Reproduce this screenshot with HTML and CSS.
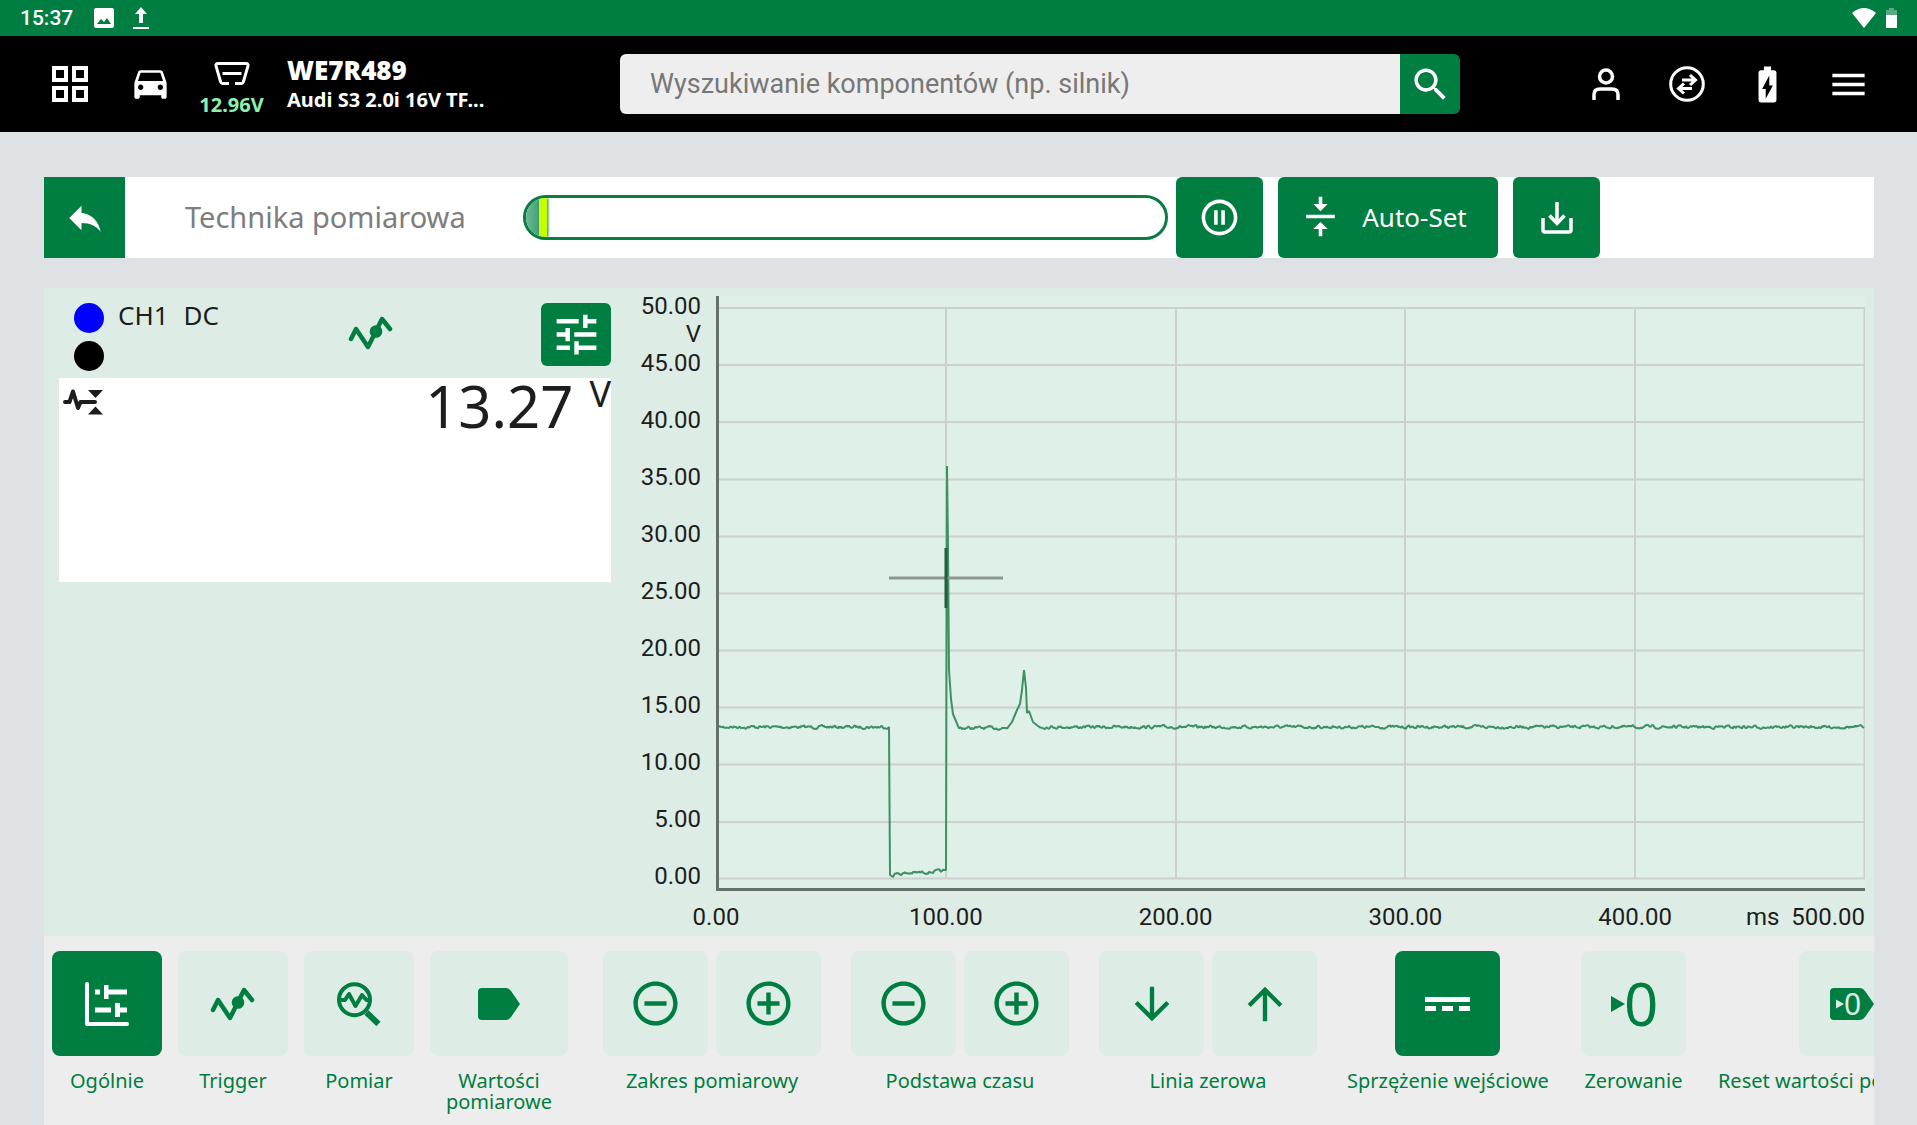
FILE: index.html
```html
<!DOCTYPE html>
<html lang="pl">
<head>
<meta charset="utf-8">
<meta name="viewport" content="width=device-width, initial-scale=1">
<title>Technika pomiarowa</title>
<link rel="stylesheet" href="styles.css">
</head>
<body>
<div class="status">
  <span class="clock">15:37</span>
  <svg class="status-image" width="20" height="20" viewBox="0 0 20 20"><path fill="#fff" fill-rule="evenodd" d="M2 0h16a2 2 0 0 1 2 2v16a2 2 0 0 1-2 2H2a2 2 0 0 1-2-2V2a2 2 0 0 1 2-2zM3 16h14l-4-6-3 4-3-3z"/></svg>
  <svg class="status-upload" width="18" height="22" viewBox="0 0 18 22"><path fill="#fff" d="M9 0l6 7h-4v9H7V7H3zM1 20h16v2H1z"/></svg>
  <span class="spacer"></span>
  <svg width="24" height="20" viewBox="0 0 24 20"><path fill="#fff" d="M12 20L0 5Q12-5 24 5z"/></svg>
  <svg class="status-battery" width="11" height="20" viewBox="0 0 11 20"><path fill="#fff" opacity=".35" d="M3 0h5v2h3v5H0V2h3z"/><path fill="#fff" d="M0 7h11v13H0z"/></svg>
</div>

<header class="header">
  <div class="header-left">
    <button class="icon-cell" aria-label="Menu główne"><svg width="48" height="48" viewBox="0 0 24 24" fill="#fff"><path d="M3 3v8h8V3H3zm6 6H5V5h4v4zm-6 4v8h8v-8H3zm6 6H5v-4h4v4zm4-16v8h8V3h-8zm6 6h-4V5h4v4zm-6 4v8h8v-8h-8zm6 6h-4v-4h4v4z"/></svg></button>
    <button class="icon-cell" aria-label="Pojazd"><svg width="43" height="43" viewBox="0 0 24 24" fill="#fff"><path d="M18.92 5.01C18.72 4.42 18.16 4 17.5 4h-11c-.66 0-1.21.42-1.42 1.01L3 11v8c0 .55.45 1 1 1h1c.55 0 1-.45 1-1v-1h12v1c0 .55.45 1 1 1h1c.55 0 1-.45 1-1v-8l-2.08-5.99zM6.5 15c-.83 0-1.5-.67-1.5-1.5S5.67 12 6.5 12s1.5.67 1.5 1.5S7.33 15 6.5 15zm11 0c-.83 0-1.5-.67-1.5-1.5s.67-1.5 1.5-1.5 1.5.67 1.5 1.5-.67 1.5-1.5 1.5zM5 10l1.5-4.5h11L19 10H5z"/></svg></button>
    <button class="icon-cell voltage"><svg width="36" height="23" viewBox="0 0 36 23" fill="none" stroke="#fff" stroke-width="3"><path d="M15 21.500H9Q7 21.500 6.500 19.500L2 4Q1.500 1.500 4 1.500H32Q34.500 1.500 34 4L29.500 19.500Q29 21.500 27 21.500H21M8.500 11.500H27.500"/></svg><span>12.96V</span></button>
    <div class="vehicle"><strong>WE7R489</strong><span>Audi S3 2.0i 16V TF...</span></div>
  </div>
  <form class="search" role="search">
    <input type="text" aria-label="Wyszukiwanie" placeholder="Wyszukiwanie komponentów (np. silnik)">
    <button type="button" aria-label="Szukaj"><svg width="43" height="43" viewBox="0 0 24 24" fill="#fff"><path d="M15.500 14h-.79l-.28-.27C15.410 12.590 16 11.110 16 9.500 16 5.910 13.090 3 9.500 3S3 5.910 3 9.500 5.910 16 9.500 16c1.610 0 3.090-.59 4.230-1.570l.27.28v.79l5 4.990L20.490 19l-4.990-5zm-6 0C7.010 14 5 11.990 5 9.500S7.010 5 9.500 5 14 7.010 14 9.500 11.990 14 9.500 14z"/></svg></button>
  </form>
  <div class="header-right">
    <button class="icon-cell" aria-label="Użytkownik"><svg width="28" height="32" viewBox="0 0 28 32" fill="none" stroke="#fff" stroke-width="3.500"><circle cx="14" cy="8.500" r="6.500"/><path d="M2 32v-5.500Q2 21 8 21H20Q26 21 26 26.500V32"/></svg></button>
    <button class="icon-cell" aria-label="Połączenie"><svg width="36" height="36" viewBox="0 0 36 36" fill="none" stroke="#fff" stroke-width="3"><circle cx="18" cy="18" r="16.300"/><path d="M13 14H26M21 9l5.500 5-5.500 5M23 22.500H10M15 17.500l-5.500 5 5.500 5"/></svg></button>
    <button class="icon-cell" aria-label="Akumulator"><svg width="43" height="43" viewBox="0 0 24 24" fill="#fff"><path d="M15.670 4H14V2h-4v2H8.330C7.600 4 7 4.600 7 5.330v15.330C7 21.400 7.600 22 8.330 22h7.330c.74 0 1.340-.6 1.340-1.330V5.330C17 4.600 16.400 4 15.670 4zM11 20v-5.500H9L13 7v5.500h2L11 20z"/></svg></button>
    <button class="icon-cell" aria-label="Menu"><svg width="43" height="43" viewBox="0 0 24 24" fill="#fff"><path d="M3 18h18v-2H3v2zm0-5h18v-2H3v2zm0-7v2h18V6H3z"/></svg></button>
  </div>
</header>

<main class="main">
  <section class="toolbar">
    <button class="back" aria-label="Wstecz"><svg width="42" height="42" viewBox="0 0 24 24" fill="#fff"><path d="M10 9V5l-7 7 7 7v-4.100c5 0 8.500 1.600 11 5.100-1-5-4-10-11-11z"/></svg></button>
    <h1>Technika pomiarowa</h1>
    <div class="progress" role="progressbar" aria-label="Postęp pomiaru"><span class="progress-fill"></span><span class="progress-mark"></span></div>
    <button class="action" aria-label="Pauza"><svg width="43" height="43" viewBox="0 0 24 24" fill="#fff"><path d="M9 16h2V8H9v8zm3-14C6.480 2 2 6.480 2 12s4.480 10 10 10 10-4.480 10-10S17.520 2 12 2zm0 18c-4.410 0-8-3.590-8-8s3.590-8 8-8 8 3.590 8 8-3.590 8-8 8zm1-4h2V8h-2v8z"/></svg></button>
    <button class="action action-wide"><svg width="43" height="43" viewBox="0 0 24 24" fill="#fff"><path d="M8 19h3v4h2v-4h3l-4-4-4 4zm8-14h-3V1h-2v4H8l4 4 4-4zM4 11v2h16v-2H4z"/></svg>Auto-Set</button>
    <button class="action" aria-label="Zapisz"><svg width="32" height="32" viewBox="0 0 32 32" fill="none" stroke="#fff" stroke-width="3.500"><path d="M2 16v12Q2 30 4 30H28Q30 30 30 28V16M16 0V22M8.500 13.500L16 21.500l7.500-8"/></svg></button>
  </section>

  <section class="scope">
    <div class="channel">
      <div class="channel-head">
        <div class="dots"><span class="dot dot-blue"></span><span class="dot dot-black"></span></div>
        <div class="channel-name"><span>CH1</span><span>DC</span></div>
        <svg class="wave" width="46" height="34" viewBox="0 0 46 34"><path fill="none" stroke="#007d40" stroke-width="4.500" stroke-linecap="round" stroke-linejoin="round" d="M3 23L8 13 20 31 34 3l8 10"/><circle cx="28" cy="15.500" r="6.300" fill="#007d40"/></svg>
        <button class="settings" aria-label="Ustawienia kanału"><svg width="53" height="53" viewBox="0 0 24 24" fill="#fff"><path d="M3 17v2h6v-2H3zM3 5v2h10V5H3zm10 16v-2h8v-2h-8v-2h-2v6h2zM7 9v2H3v2h4v2h2V9H7zm14 4v-2H11v2h10zm-6-4h2V7h4V5h-4V3h-2v6z"/></svg></button>
      </div>
      <div class="reading">
        <svg width="40" height="26" viewBox="0 0 40 26"><path fill="none" stroke="#1d1d1d" stroke-width="4" stroke-linecap="round" stroke-linejoin="round" d="M2 13H6.500L10 2.500 15 19l2.500-6H32"/><path fill="#1d1d1d" d="M25 1H40l-7.500 8zM25 25.500H40l-7.500-8z"/></svg>
        <div class="value">13.27<span class="unit">V</span></div>
      </div>
    </div>

    <div class="chart">
      <div class="y-labels">
        <div>50.00<br>V</div><div>45.00</div><div>40.00</div><div>35.00</div><div>30.00</div><div>25.00</div><div>20.00</div><div>15.00</div><div>10.00</div><div>5.00</div><div>0.00</div>
      </div>
      <div class="plot">
        <svg class="plot-svg" viewBox="0 0 1149 595" preserveAspectRatio="none" role="img" aria-label="Przebieg napięcia">
          <path class="grid-lines" d="M0 12H1149M0 69H1149M0 126H1149M0 183.500H1149M0 240.500H1149M0 297.500H1149M0 354.500H1149M0 411.500H1149M0 468.500H1149M0 526H1149M0 582.500H1149M230 12V583M460 12V583M689 12V583M919 12V583M1148.500 12V583"/>
          <path class="trace" id="trace"/>
          <path class="cross" d="M173 282H287"/>
          <path class="cross-level" d="M230 252V312"/>
          <path class="axes" d="M1.500 0V593.500H1149"/>
        </svg>
        <div class="x-labels">
          <div><span>0.00</span></div><div><span>100.00</span></div><div><span>200.00</span></div><div><span>300.00</span></div><div><span>400.00</span><em>ms&nbsp; 500.00</em></div>
        </div>
      </div>
    </div>
  </section>

  <nav class="strip" aria-label="Funkcje pomiaru">
    <div class="tabs">
      <button class="tool"><span class="tile active"><svg width="44" height="44" viewBox="0 0 44 44"><path fill="none" stroke="#fff" stroke-width="4" stroke-linecap="round" stroke-linejoin="round" d="M2 2V42H42"/><path fill="#fff" d="M10 7.500h5v5h-5zM19 3h4.500v4.500H42v5H23.500V17H19zM10 25.500h16v5H10zM30 21h5v4.500h7v5h-7V35h-5z"/></svg></span><span class="caption">Ogólnie</span></button>
      <button class="tool"><span class="tile"><svg width="46" height="34" viewBox="0 0 46 34"><path fill="none" stroke="#007d40" stroke-width="4.500" stroke-linecap="round" stroke-linejoin="round" d="M3 23L8 13 20 31 34 3l8 10"/><circle cx="28" cy="15.500" r="6.300" fill="#007d40"/></svg></span><span class="caption">Trigger</span></button>
      <button class="tool"><span class="tile"><svg width="44" height="44" viewBox="0 0 44 44" fill="none" stroke="#007d40" stroke-width="4"><circle cx="17.500" cy="17.700" r="15.500"/><path stroke-linejoin="round" d="M3 18H8L12 12l6.500 12L25 13l4.500 5H33"/><path stroke-width="6" d="M29.500 30.500L41.500 42"/></svg></span><span class="caption">Pomiar</span></button>
      <button class="tool tool-wide"><span class="tile"><svg width="42" height="32" viewBox="0 0 42 32"><path fill="#007d40" d="M4 0H28Q31 0 33 3L42 16 33 29Q31 32 28 32H4Q0 32 0 28V4Q0 0 4 0z"/></svg></span><span class="caption">Wartości pomiarowe</span></button>
    </div>
    <div class="group">
      <div class="pair">
        <button class="tile" aria-label="Zmniejsz zakres"><svg width="53" height="53" viewBox="0 0 24 24" fill="#007d40"><path d="M7 11v2h10v-2H7zm5-9C6.480 2 2 6.480 2 12s4.480 10 10 10 10-4.480 10-10S17.520 2 12 2zm0 18c-4.410 0-8-3.590-8-8s3.590-8 8-8 8 3.590 8 8-3.590 8-8 8z"/></svg></button>
        <button class="tile" aria-label="Zwiększ zakres"><svg width="53" height="53" viewBox="0 0 24 24" fill="#007d40"><path d="M13 7h-2v4H7v2h4v4h2v-4h4v-2h-4V7zm-1-5C6.480 2 2 6.480 2 12s4.480 10 10 10 10-4.480 10-10S17.520 2 12 2zm0 18c-4.410 0-8-3.590-8-8s3.590-8 8-8 8 3.590 8 8-3.590 8-8 8z"/></svg></button>
      </div>
      <span class="caption">Zakres pomiarowy</span>
    </div>
    <div class="group">
      <div class="pair">
        <button class="tile" aria-label="Skróć podstawę czasu"><svg width="53" height="53" viewBox="0 0 24 24" fill="#007d40"><path d="M7 11v2h10v-2H7zm5-9C6.480 2 2 6.480 2 12s4.480 10 10 10 10-4.480 10-10S17.520 2 12 2zm0 18c-4.410 0-8-3.590-8-8s3.590-8 8-8 8 3.590 8 8-3.590 8-8 8z"/></svg></button>
        <button class="tile" aria-label="Wydłuż podstawę czasu"><svg width="53" height="53" viewBox="0 0 24 24" fill="#007d40"><path d="M13 7h-2v4H7v2h4v4h2v-4h4v-2h-4V7zm-1-5C6.480 2 2 6.480 2 12s4.480 10 10 10 10-4.480 10-10S17.520 2 12 2zm0 18c-4.410 0-8-3.590-8-8s3.590-8 8-8 8 3.590 8 8-3.590 8-8 8z"/></svg></button>
      </div>
      <span class="caption">Podstawa czasu</span>
    </div>
    <div class="group">
      <div class="pair">
        <button class="tile" aria-label="Linia zerowa w dół"><svg width="52" height="52" viewBox="0 0 24 24" fill="#007d40"><path d="M20 12l-1.410-1.410L13 16.170V4h-2v12.170l-5.580-5.590L4 12l8 8 8-8z"/></svg></button>
        <button class="tile" aria-label="Linia zerowa w górę"><svg width="52" height="52" viewBox="0 0 24 24" fill="#007d40"><path d="M4 12l1.410 1.410L11 7.830V20h2V7.830l5.580 5.590L20 12l-8-8-8 8z"/></svg></button>
      </div>
      <span class="caption">Linia zerowa</span>
    </div>
    <button class="tool single"><span class="tile active"><svg width="45" height="14" viewBox="0 0 45 14"><path fill="#fff" d="M0 0H45V5H0zM0 9H11v5H0zM17 9H28v5H17zM34 9H45v5H34z"/></svg></span><span class="caption">Sprzężenie wejściowe</span></button>
    <button class="tool single"><span class="tile"><svg class="zero-icon" width="44" height="46" viewBox="0 0 44 46" fill="#007d40"><path d="M0 15l14 8-14 8z"/><text class="zero-large" x="13" y="45">0</text></svg></span><span class="caption">Zerowanie</span></button>
    <button class="tool single"><span class="tile"><svg class="zero-icon" width="44" height="32" viewBox="0 0 44 32"><path fill="#007d40" d="M4 0H30Q33 0 35 3L44 16 35 29Q33 32 30 32H4Q0 32 0 28V4Q0 0 4 0z"/><path fill="#ddede5" d="M6 11.500l8 4.500-8 4.500z"/><text class="zero-small" x="14" y="27">0</text></svg></span><span class="caption">Reset wartości pomiarowych</span></button>
  </nav>
</main>
<script src="script.js"></script>
</body>
</html>
```

FILE: styles.css
```css
* { box-sizing: border-box; }

body {
  margin: 0;
  min-height: 100vh;
  display: flex;
  flex-direction: column;
  background: #dee2e5;
  color: #1d1d1d;
  font-family: "Noto Sans", sans-serif;
}

button {
  display: flex;
  align-items: center;
  justify-content: center;
  margin: 0;
  padding: 0;
  border: 0;
  background: none;
  color: inherit;
  font: inherit;
  cursor: pointer;
}

svg { display: block; flex: none; }

/* Status bar */
.status {
  display: flex;
  align-items: center;
  height: 36px;
  padding: 0 20px;
  background: #007d40;
  color: #fff;
}
.clock { font: 500 21px/36px Roboto, sans-serif; }
.status-image { margin-left: 21px; }
.status-upload { margin-left: 18px; }
.spacer { flex: 1; }
.status-battery { margin-left: 10px; }

/* Header */
.header {
  display: flex;
  align-items: center;
  height: 96px;
  background: #000;
  color: #fff;
}
.header-left {
  display: flex;
  flex: none;
  width: 620px;
  padding-left: 29px;
}
.header-right {
  display: flex;
  flex: none;
  justify-content: flex-end;
  width: 457px;
  padding-right: 28px;
}
.icon-cell { width: 81px; height: 96px; }
.voltage {
  flex-direction: column;
  gap: 6px;
  padding-top: 12px;
  color: #8ff0ae;
  font-size: 20px;
  font-weight: 700;
  line-height: 28px;
}
.vehicle {
  display: flex;
  flex-direction: column;
  justify-content: center;
  padding-left: 15px;
  font-weight: 700;
}
.vehicle strong { font-size: 26px; line-height: 32px; }
.vehicle span { font-size: 20px; line-height: 28px; }
.search { display: flex; flex: 1; height: 60px; }
.search input {
  flex: 1;
  min-width: 0;
  padding: 0 30px;
  border: 0;
  border-radius: 6px 0 0 6px;
  background: #eee;
  color: #333;
  font: 27px/32px Roboto, sans-serif;
}
.search input::placeholder { color: #777; opacity: 1; }
.search button {
  width: 60px;
  border-radius: 0 6px 6px 0;
  background: #007d40;
}

/* Main column */
.main {
  display: flex;
  flex: 1;
  flex-direction: column;
  padding: 45px 43px 0 44px;
}

/* Toolbar */
.toolbar {
  display: flex;
  align-items: center;
  height: 81px;
  margin-bottom: 30px;
  padding-right: 274px;
  background: #fff;
}
.back { width: 81px; height: 81px; background: #007d40; }
.toolbar h1 {
  width: 398px;
  margin: 0;
  padding: 0 0 2px 60px;
  color: #7d7d7d;
  font-size: 29px;
  font-weight: 400;
  line-height: 40px;
  white-space: nowrap;
}
.progress {
  display: flex;
  flex: 1;
  height: 45px;
  margin-right: 8px;
  border: 3px solid #087d43;
  border-radius: 23px;
  background: #fff;
  overflow: hidden;
}
.progress-fill { width: 13px; background: linear-gradient(90deg, #6bb795, #43a277); }
.progress-mark { width: 8px; background: #c8ff00; box-shadow: 1px 0 3px #007d40; }
.action {
  gap: 20px;
  width: 87px;
  height: 81px;
  border-radius: 6px;
  background: #007d40;
  color: #fff;
  font-size: 26px;
}
.action + .action { margin-left: 15px; }
.action-wide { width: 220px; padding: 0 10px 2px 0; }

/* Scope */
.scope {
  display: flex;
  background: #ddede5;
}
.channel { flex: none; width: 567px; padding: 15px 0 15px 15px; }
.channel-head {
  display: flex;
  align-items: flex-start;
  height: 75px;
  padding-left: 15px;
}
.dots { display: flex; flex-direction: column; gap: 8px; }
.dot { width: 30px; height: 30px; border-radius: 50%; }
.dot-blue { background: #00f; }
.dot-black { background: #000; }
.channel-name {
  display: flex;
  gap: 15px;
  width: 244px;
  padding-left: 14px;
  font-size: 26px;
  line-height: 24px;
}
.wave { margin-top: 13px; }
.settings {
  width: 70px;
  height: 63px;
  margin-left: auto;
  border-radius: 6px;
  background: #007d40;
}
.reading {
  display: flex;
  align-items: flex-start;
  justify-content: space-between;
  height: 204px;
  padding: 0 0 0 4px;
  background: #fff;
}
.reading svg { margin-top: 11px; }
.value { display: flex; align-items: flex-start; gap: 16px; font-size: 58px; line-height: 56px; }
.unit { font-size: 36px; line-height: 32px; }

/* Chart */
.chart {
  display: flex;
  flex: 1;
  min-width: 0;
  padding: 4px 9px 5px 0;
  font: 24px/28px Roboto, sans-serif;
}
.y-labels { width: 105px; padding-right: 15px; text-align: right; }
.y-labels div { height: 57px; }
.plot { flex: 1; min-width: 0; padding-top: 4px; }
.plot-svg { width: 100%; height: 595px; background: #dff0e8; }
.grid-lines { fill: none; stroke: #ccd0ce; stroke-width: 2; }
.cross { fill: none; stroke: #8c9792; stroke-width: 3; }
.cross-level { fill: none; stroke: #235c3e; stroke-width: 3; }
.trace { fill: none; stroke: #3f9065; stroke-width: 2; stroke-linejoin: bevel; }
.axes { fill: none; stroke: #66706b; stroke-width: 3; }
.x-labels { display: grid; grid-template-columns: repeat(5, 1fr); padding-top: 12px; }
.x-labels div { display: flex; justify-content: space-between; white-space: nowrap; }
.x-labels span { width: 120px; margin-left: -60px; text-align: center; }
.x-labels em { font-style: normal; }

/* Function strip */
.strip {
  display: flex;
  flex: 1;
  align-items: flex-start;
  gap: 30px;
  padding: 15px 0 0 8px;
  background: #ededed;
  color: #007d40;
  font-size: 20px;
  line-height: 21px;
  overflow: hidden;
}
.tabs { display: flex; flex: none; gap: 16px; margin-right: 5px; }
.tool {
  flex: none;
  flex-direction: column;
  justify-content: flex-start;
  width: 110px;
}
.tool-wide { width: 138px; }
.tile {
  display: flex;
  align-items: center;
  justify-content: center;
  width: 100%;
  height: 105px;
  border-radius: 8px;
  background: #ddede5;
}
.active { background: #007d40; }
.caption { margin-top: 14px; text-align: center; }
.group { display: flex; flex: none; flex-direction: column; align-items: center; }
.pair { display: flex; gap: 8px; }
.pair .tile, .single .tile { width: 105px; }
.single { width: auto; white-space: nowrap; }
.single + .single { margin-left: 2px; }
.zero-icon { overflow: visible; }
.zero-large { font-size: 60px; }
.zero-small { font-size: 30px; fill: #ddede5; }
```

FILE: script.js
```js
// Builds the voltage trace: key points joined by lines, noise on the flat parts.
(function () {
  var seed = 7;
  function noise() {
    seed = (seed * 16807) % 2147483647;
    return seed / 2147483647 - 0.5;
  }
  var points = [];
  function flat(x1, y1, x2, y2) {
    var drift = 0;
    for (var x = x1; x < x2; x += 1) {
      drift = drift * 0.5 + noise() * 2.6;
      var y = y1 + (y2 - y1) * (x - x1) / (x2 - x1) + drift;
      points.push(x + " " + y.toFixed(1));
    }
  }
  flat(1, 431, 172, 431);
  points.push("173 431", "174 579", "177 581");
  flat(179, 578, 229, 575);
  points.push("230 574", "231 170", "232 250", "233 374", "235 403", "237 418", "242 430");
  flat(243, 432, 292, 432);
  points.push("296 426", "301 414", "304 408", "306 394", "308 374", "310 392", "311 417", "313 415", "317 426", "322 430");
  flat(324, 431, 1149, 431);
  document.getElementById("trace").setAttribute("d", "M" + points.join("L"));
})();
```
